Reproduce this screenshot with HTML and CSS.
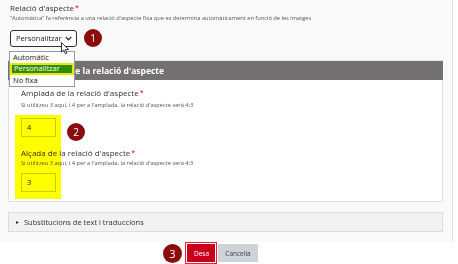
FILE: index.html
```html
<!DOCTYPE html>
<html lang="ca">
<head>
    <meta charset="UTF-8">
    <meta name="viewport" content="width=device-width, initial-scale=1.0">
    <title>Relació d'aspecte</title>
    <link rel="stylesheet" href="styles.css">
</head>
<body>
    <div class="page">
        <div class="form-item">
            <div class="form-label">Relació d'aspecte<span class="req">*</span></div>
            <div class="desc">“Automàtica” fa referència a una relació d'aspecte fixa que es determina automàticament en funció de les imatges</div>

            <div class="select-row">
                <div class="select-wrap">
                    <div class="select">
                        <span>Personalitzar</span>
                        <svg class="chevron" width="7" height="5" viewBox="0 0 7 5"><path d="M0.8 1 L3.5 3.8 L6.2 1" fill="none" stroke="#333" stroke-width="1.3"/></svg>
                    </div>
                    <svg class="cursor" width="9" height="13" viewBox="0 0 9 13"><path d="M0.5 0.5 L0.5 10 L2.8 8 L4.4 11.8 L5.9 11.1 L4.4 7.5 L7.6 7.5 Z" fill="#fff" stroke="#222" stroke-width="0.9" stroke-linejoin="round"/></svg>
                    <ul class="dropdown">
                        <li>Automàtic</li>
                        <li class="active">Personalitzar</li>
                        <li>No fixa</li>
                    </ul>
                </div>
                <span class="badge">1</span>
            </div>
        </div>

        <div class="fieldset">
            <div class="legend">Configuració de la relació d'aspecte</div>
            <div class="fieldset-body">
                <div class="highlight"></div>

                <div class="field">
                    <div class="field-label">Amplada de la relació d'aspecte<span class="req">*</span></div>
                    <div class="help">Si utilitzeu 3 aquí, i 4 per a l'amplada, la relació d'aspecte serà 4:3</div>
                    <div class="input-row">
                        <div class="text-input">4</div>
                        <span class="badge">2</span>
                    </div>
                </div>

                <div class="field field-second">
                    <div class="field-label">Alçada de la relació d'aspecte<span class="req">*</span></div>
                    <div class="help">Si utilitzeu 3 aquí, i 4 per a l'amplada, la relació d'aspecte serà 4:3</div>
                    <div class="input-row">
                        <div class="text-input">3</div>
                    </div>
                </div>
            </div>
        </div>

        <div class="details">
            <span class="arrow">&#9656;</span>
            <span>Substitucions de text i traduccions</span>
        </div>
    </div>

    <div class="actions">
        <span class="badge badge-lg">3</span>
        <button class="btn btn-primary">Desa</button>
        <button class="btn btn-cancel">Cancel·la</button>
    </div>
</body>
</html>
```

FILE: styles.css
```css
body {
    margin: 0;
    padding: 0;
    background-color: #ffffff;
    font-family: "Open Sans", "Noto Sans", sans-serif;
    color: #333333;
}

.page {
    width: 452px;
    background-color: #f9f9f9;
    border-right: 1px solid #e2e2e2;
    padding: 2px 0 10px 0;
}

.form-item {
    padding-left: 10px;
}

.form-label {
    font-size: 8px;
    line-height: 12px;
    color: #333333;
}

.req {
    color: #e0001b;
    margin-left: 1px;
    vertical-align: top;
    font-size: 7px;
}

.desc {
    font-size: 5.7px;
    line-height: 8px;
    color: #555555;
}

.select-row {
    display: flex;
    align-items: center;
    margin-top: 7px;
}

.select-wrap {
    position: relative;
}

.select {
    height: 15px;
    border: 1px solid #333333;
    border-radius: 3px;
    background-color: #ffffff;
    display: flex;
    align-items: center;
    justify-content: space-between;
    padding: 0 4px 0 5px;
    width: 56px;
    font-size: 7.5px;
    color: #222222;
}

.chevron {
    margin-top: 1px;
}

.cursor {
    position: absolute;
    left: 51px;
    top: 12px;
    z-index: 3;
}

.dropdown {
    position: absolute;
    left: -1px;
    top: 21px;
    z-index: 2;
    list-style: none;
    margin: 0;
    padding: 0;
    width: 64px;
    background-color: #ffffff;
    border: 1px solid #9a9a9a;
    font-size: 7.5px;
    color: #222222;
}

.dropdown li {
    height: 11.5px;
    line-height: 11.5px;
    padding-left: 3px;
}

.dropdown li.active {
    background-color: #2f8c00;
    color: #ffffff;
    box-shadow: inset 0 0 0 2px #e8e800;
    padding-left: 4px;
}

.badge {
    display: inline-flex;
    align-items: center;
    justify-content: center;
    width: 18px;
    height: 18px;
    border-radius: 50%;
    background-color: #8b0c0c;
    color: #ffffff;
    font-size: 10px;
    margin-left: 6px;
}

.badge-lg {
    width: 19px;
    height: 19px;
    font-size: 11px;
    margin-left: 0;
    margin-right: 5px;
}

.select-row .badge {
    margin-left: 7px;
}

.fieldset {
    margin: 13px 9px 0 8px;
}

.legend {
    height: 19px;
    line-height: 19px;
    background-color: #727071;
    border-top: 1px solid #e4e4e4;
    color: #ffffff;
    font-weight: bold;
    font-size: 8.5px;
    padding-left: 6px;
}

.fieldset-body {
    position: relative;
    background-color: #ffffff;
    border: 1px solid #e0e0e0;
    border-top: none;
    padding: 7px 0 9px 12px;
}

.highlight {
    position: absolute;
    left: 6px;
    top: 35px;
    width: 46px;
    height: 84px;
    background-color: #ffff00;
    mix-blend-mode: multiply;
    z-index: 1;
}

.field-label {
    font-size: 8px;
    line-height: 12px;
    color: #333333;
}

.help {
    font-size: 5.7px;
    line-height: 8px;
    color: #555555;
    margin-top: 2px;
}

.input-row {
    display: flex;
    align-items: center;
    margin-top: 5px;
}

.text-input {
    width: 28px;
    height: 17px;
    line-height: 17px;
    border: 1px solid #cccccc;
    background-color: #ffffff;
    padding-left: 5px;
    font-size: 7.5px;
    color: #222222;
}

.input-row .badge {
    margin-left: 11px;
    margin-top: 9px;
}

.field-second {
    margin-top: 6px;
}

.field-second .help {
    margin-top: 0;
}

.field-second .input-row {
    margin-top: 6px;
}

.details {
    margin: 10px 9px 0 8px;
    height: 18px;
    background-color: #f2f2f2;
    border: 1px solid #dcdcdc;
    display: flex;
    align-items: center;
    font-size: 7.5px;
    color: #333333;
}

.arrow {
    font-size: 6px;
    margin: 0 5px 0 7px;
}

.actions {
    display: flex;
    align-items: center;
    padding-left: 163px;
    height: 22px;
}

.btn {
    font-family: "Open Sans", "Noto Sans", sans-serif;
    font-size: 6.5px;
    height: 18px;
    border: none;
    padding: 0 7px;
    cursor: pointer;
}

.btn-primary {
    background-color: #c8001c;
    color: #ffffff;
    outline: 1.5px solid #e8213a;
    outline-offset: 1px;
    width: 28px;
}

.btn-cancel {
    background-color: #ced3d9;
    color: #444444;
    margin-left: 3px;
    width: 40px;
    padding: 0 4px;
}
```
